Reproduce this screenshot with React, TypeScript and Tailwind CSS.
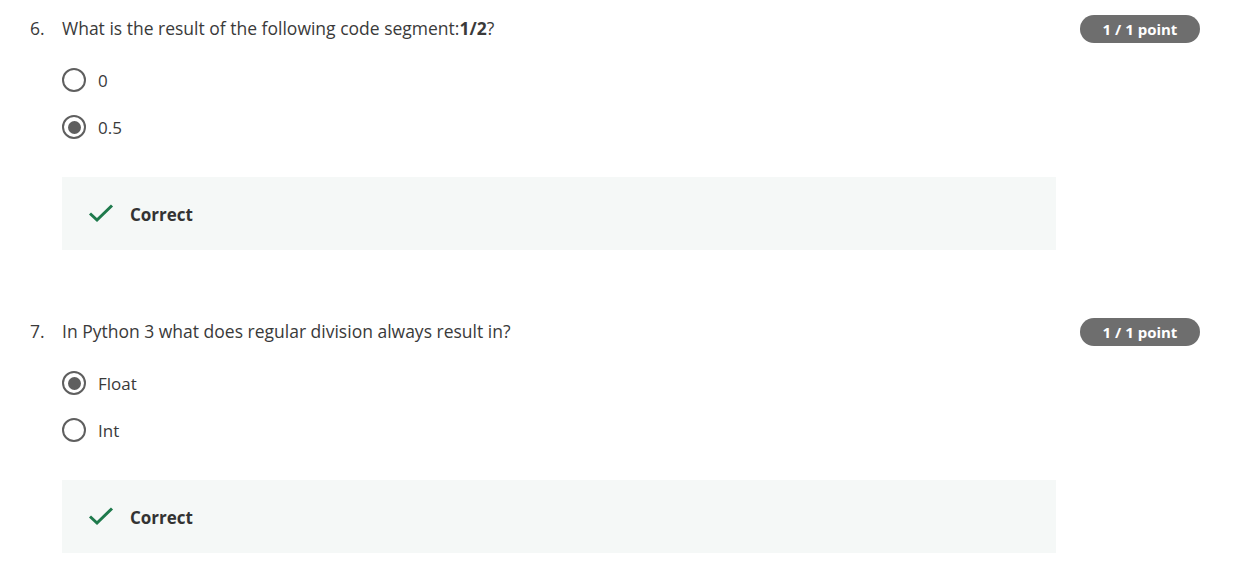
import React from "react";

const font = { fontFamily: '"Open Sans", "Noto Sans", sans-serif' };

function Radio({ checked, label }: { checked: boolean; label: string }) {
  return (
    <div className="flex items-center h-6">
      <div className="w-6 h-6 rounded-full border-[2.5px] border-[#5f5f5f] flex items-center justify-center shrink-0">
        {checked && <div className="w-[13px] h-[13px] rounded-full bg-[#5f5f5f]" />}
      </div>
      <span className="ml-3 mt-[2px] text-[17px] text-[#3a3a3a] leading-6">{label}</span>
    </div>
  );
}

function Question({
  num,
  title,
  options,
}: {
  num: string;
  title: React.ReactNode;
  options: { label: string; checked: boolean }[];
}) {
  return (
    <div className="flex flex-col">
      <div className="flex items-center justify-between h-7">
        <div className="flex items-center text-[17.5px] text-[#3a3a3a] leading-7 -mt-[2px]">
          <span className="w-8 shrink-0">{num}</span>
          <span>{title}</span>
        </div>
        <div className="w-[120px] h-7 rounded-full bg-[#6e6e6e] text-white text-[15px] font-bold flex items-center justify-center">
          1 / 1 point
        </div>
      </div>
      <div className="ml-8 mt-[25px] flex flex-col gap-[23px]">
        {options.map((o) => (
          <Radio key={o.label} checked={o.checked} label={o.label} />
        ))}
      </div>
      <div className="ml-8 mt-[38px] w-[994px] h-[73px] bg-[#f5f8f7] flex items-center pl-[26px]">
        <svg width="26" height="20" viewBox="0 0 26 20" className="mt-[-2px]">
          <path d="M2 10.5 L9 17 L24 2.5" fill="none" stroke="#1e7a4c" strokeWidth="3" />
        </svg>
        <span className="ml-[16px] mt-[2px] text-[17px] font-bold text-[#333333]">Correct</span>
      </div>
    </div>
  );
}

export default function App() {
  return (
    <div className="w-[1241px] h-[579px] bg-white pl-[30px] pr-[41px] pt-[15px] flex flex-col gap-[68px]" style={font}>
      <Question
        num="6."
        title={
          <>
            What is the result of the following code segment:<b className="font-bold">1/2</b>?
          </>
        }
        options={[
          { label: "0", checked: false },
          { label: "0.5", checked: true },
        ]}
      />
      <Question
        num="7."
        title="In Python 3 what does regular division always result in?"
        options={[
          { label: "Float", checked: true },
          { label: "Int", checked: false },
        ]}
      />
    </div>
  );
}
